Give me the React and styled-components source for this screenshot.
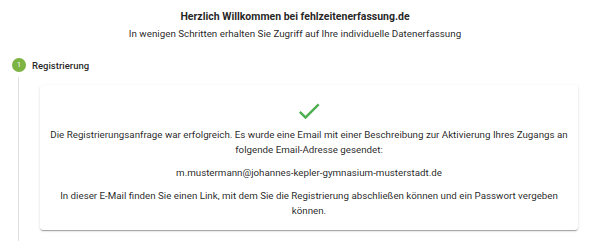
import styled, { createGlobalStyle } from "styled-components";

const GlobalStyle = createGlobalStyle`
  html, body {
    margin: 0;
    padding: 0;
    background: #fff;
    font-family: Roboto, "Liberation Sans", sans-serif;
    color: rgba(0, 0, 0, 0.87);
  }
`;

const Page = styled.div`
  width: 590px;
  height: 241px;
  overflow: hidden;
`;

const Header = styled.header`
  display: flex;
  flex-direction: column;
  align-items: center;
  padding-top: 10px;
  text-align: center;
`;

const Title = styled.h1`
  margin: 0;
  font-size: 10.5px;
  font-weight: 700;
  line-height: 14px;
`;

const Subtitle = styled.p`
  margin: 3px 0 0;
  font-size: 9.8px;
  line-height: 14px;
`;

const Stepper = styled.div`
  padding: 17px 12px 0 12px;
`;

const StepLabel = styled.div`
  display: flex;
  align-items: center;
  gap: 6px;
  height: 14px;
`;

const StepIcon = styled.span`
  width: 14px;
  height: 14px;
  border-radius: 50%;
  background: #7cb342;
  color: #fff;
  font-size: 7px;
  display: flex;
  align-items: center;
  justify-content: center;
`;

const StepName = styled.span`
  font-size: 9.5px;
  font-weight: 500;
`;

const StepContent = styled.div`
  margin: 5px 0 0 6px;
  border-left: 1.5px solid #e0e0e0;
  padding: 8px 0 20px 21px;
`;

const Card = styled.div`
  background: #fff;
  border-radius: 3px;
  box-shadow: 0 2px 1px -1px rgba(0, 0, 0, 0.2), 0 1px 1px 0 rgba(0, 0, 0, 0.14),
    0 1px 3px 0 rgba(0, 0, 0, 0.12);
  padding: 12px 6px 12px;
  display: flex;
  flex-direction: column;
  align-items: center;
  text-align: center;
`;

const Check = styled.svg`
  width: 28px;
  height: 28px;
  margin-bottom: 2px;
`;

const Text = styled.p`
  margin: 0 0 8px;
  font-size: 9.75px;
  line-height: 15px;

  &:last-child {
    margin-bottom: 0;
  }
`;

export default function App() {
  return (
    <Page>
      <GlobalStyle />
      <Header>
        <Title>Herzlich Willkommen bei fehlzeitenerfassung.de</Title>
        <Subtitle>
          In wenigen Schritten erhalten Sie Zugriff auf Ihre individuelle Datenerfassung
        </Subtitle>
      </Header>
      <Stepper>
        <StepLabel>
          <StepIcon>1</StepIcon>
          <StepName>Registrierung</StepName>
        </StepLabel>
        <StepContent>
          <Card>
            <Check viewBox="0 0 24 24">
              <path
                d="M9 16.17 4.83 12l-1.42 1.41L9 19 21 7l-1.41-1.41z"
                fill="#4caf50"
              />
            </Check>
            <Text>
              Die Registrierungsanfrage war erfolgreich. Es wurde eine Email mit einer
              Beschreibung zur Aktivierung Ihres Zugangs an folgende Email-Adresse gesendet:
            </Text>
            <Text>m.mustermann@johannes-kepler-gymnasium-musterstadt.de</Text>
            <Text>
              In dieser E-Mail finden Sie einen Link, mit dem Sie die Registrierung
              abschließen können und ein Passwort vergeben können.
            </Text>
          </Card>
        </StepContent>
      </Stepper>
    </Page>
  );
}
